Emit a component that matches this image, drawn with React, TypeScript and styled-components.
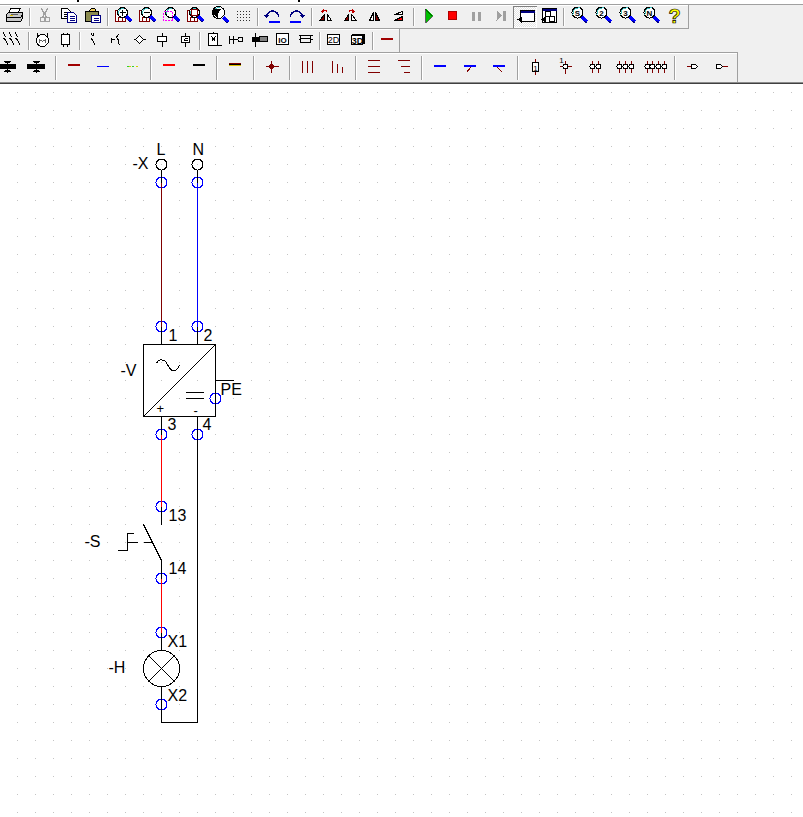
import React, { ReactNode } from "react"
import styled, { createGlobalStyle } from "styled-components"

const K = "#000000"
const R = "#800000"
const B = "#0000ff"
const N = "#000080"
const G = "#a0a0a0"

const GlobalStyle = createGlobalStyle`
    html, body {
        margin: 0;
        height: 100%;
        overflow: hidden;
        background: #ffffff;
    }
    #root {
        height: 100%;
    }
`

const Page = styled.div`
    display: flex;
    flex-direction: column;
    height: 817px;
    width: 803px;
    font-family: "Liberation Sans", Arial, sans-serif;
`

const MenuStrip = styled.div`
    display: flex;
    height: 4px;
    background: #ffffff;
`

const Descender = styled.span<{ $left: number }>`
    width: 2px;
    height: 2px;
    margin-left: ${(p) => p.$left}px;
    background: #000000;
`

const Header = styled.header`
    display: flex;
    flex-direction: column;
    background: #f0f0f0;
    border-top: 1px solid ${G};
    border-bottom: 1px solid #404040;
    padding-bottom: 1px;
    box-shadow: inset 0 -1px 0 #8c8c8c;
`

const Toolbar = styled.div<{ $width: number; $ruled?: boolean; $closed?: boolean; $pad: number }>`
    display: flex;
    align-items: center;
    box-sizing: border-box;
    width: ${(p) => p.$width}px;
    padding: 1px 0 0 ${(p) => p.$pad}px;
    border-right: 1px solid ${G};
    border-top: ${(p) => (p.$ruled ? `1px solid ${G}` : "0")};
    border-bottom: ${(p) => (p.$closed ? `1px solid ${G}` : "0")};
    box-shadow: inset 0 1px 0 #ffffff;
`

const ToolButton = styled.div<{ $w: number; $h: number; $pressed?: boolean; $shift?: number }>`
    display: flex;
    flex: none;
    align-items: center;
    justify-content: center;
    box-sizing: border-box;
    width: ${(p) => p.$w}px;
    height: ${(p) => p.$h}px;
    padding-bottom: 2px;
    margin-left: ${(p) => p.$shift || 0}px;
    ${(p) =>
        p.$pressed
            ? `background: repeating-conic-gradient(#ffffff 0 25%, #e4e4e4 0 50%) 0 0 / 2px 2px;
               box-shadow: inset 1px 1px 0 #808080, inset -1px -1px 0 #ffffff;`
            : ""}
`

const Separator = styled.div<{ $gap: number; $h: number }>`
    display: flex;
    flex: none;
    justify-content: center;
    width: ${(p) => p.$gap}px;
    height: ${(p) => p.$h}px;

    &::before {
        content: "";
        width: 1px;
        background: ${G};
        border-right: 1px solid #ffffff;
    }
`

const Glyph = styled.svg`
    flex: none;
    width: 20px;
    height: 20px;
    overflow: visible;
    shape-rendering: crispEdges;
`

const GlyphText = styled.text<{ $size: number; $bold?: boolean }>`
    font-family: "Liberation Sans", Arial, sans-serif;
    font-size: ${(p) => p.$size}px;
    font-weight: ${(p) => (p.$bold ? 700 : 400)};
    text-anchor: middle;
`

const Canvas = styled.main`
    flex: 1;
    overflow: hidden;
    background-color: #ffffff;
    background-image: linear-gradient(to right, transparent 1px, #ffffff 1px),
        linear-gradient(to bottom, #c4c4c4 1px, #ffffff 1px);
    background-size: 18px 18px;
    background-position: 17px 8px;
`

const Diagram = styled.svg`
    display: block;
    width: 803px;
    height: 733px;
    shape-rendering: crispEdges;
`

const DiagramLabel = styled.text<{ $size?: number }>`
    font-family: "Liberation Sans", Arial, sans-serif;
    font-size: ${(p) => p.$size || 16}px;
    fill: #000000;
`

const L = ({ d, c = K, w = 1 }: { d: string; c?: string; w?: number }) => (
    <path d={d} fill="none" stroke={c} strokeWidth={w} />
)

const Lens = ({ x = 0, y = -3, r = 5, children }: { x?: number; y?: number; r?: number; children?: ReactNode }) => (
    <>
        <L d={`M${x + r - 1} ${y + r - 1} L${x + r + 4} ${y + r + 4}`} c={B} w={3} />
        <L d={`M${x + r + 1} ${y + r + 3} L${x + r + 4} ${y + r + 5}`} c={N} />
        <circle cx={x} cy={y} r={r} fill="#ffffff" stroke={K} />
        <path d={`M${x - r + 1} ${y + 2} A${r} ${r} 0 0 1 ${x + 2} ${y - r + 1}`} fill="none" stroke="#40c0c0" />
        {children}
    </>
)

const Doc = ({ x = -7, y = -5, w = 10, h = 11 }) => (
    <path
        d={`M${x} ${y} H${x + w} V${y + h} H${x}Z M${x + 3} ${y + h} V${y + h - 4} H${x + 7} V${y + h}`}
        fill="#ffffff"
        stroke={R}
        strokeWidth={1.4}
    />
)

const LetterLens = ({ t }: { t: string }) => (
    <Lens x={-1} y={-3} r={5.5}>
        <GlyphText x={-1} y={0} $size={8} $bold>
            {t}
        </GlyphText>
    </Lens>
)

const Pin = ({ x, y = 0 }: { x: number; y?: number }) => (
    <>
        <L d={`M${x} ${y - 6} V${y + 6}`} c={R} />
        <circle cx={x} cy={y} r={2.5} fill="#ffffff" stroke={K} />
    </>
)

const Contact = ({ x }: { x: number }) => <L d={`M${x - 2} -7 L${x} -2 M${x - 1} -1 L${x + 3} 6 M${x - 3} -1 H${x - 1}`} />

const icons: Record<string, ReactNode> = {
    print: (
        <>
            <path d="M-4 -7 H6 L3 -2 H-6Z" fill="#ffffff" stroke={K} />
            <path d="M-8 -1 L-6 -3 H8 V3 L6 6 H-8Z" fill="#c8c8c8" stroke={K} />
            <L d="M-8 2 H6 L8 -1" />
            <L d="M-4 -1 H3" c="#606060" />
            <L d="M-5 0 H-2" c="#e0c000" />
        </>
    ),
    cut: (
        <>
            <L d="M-3 -7 L2 2 M3 -7 L-2 2" c={G} w={1.4} />
            <circle cx={-2} cy={4} r={2.4} fill="none" stroke={G} />
            <circle cx={3} cy={4} r={2.4} fill="none" stroke={G} />
        </>
    ),
    copy: (
        <>
            <path d="M-7 -7 H-1 L2 -4 V3 H-7Z" fill="#ffffff" stroke={K} />
            <L d="M-5 -3 H0 M-5 -1 H0 M-5 1 H-1" />
            <path d="M-1 -3 H5 L8 0 V7 H-1Z" fill="#ffffff" stroke={N} strokeWidth={1.3} />
            <L d="M1 1 H6 M1 3 H6 M1 5 H6" c={N} />
        </>
    ),
    paste: (
        <>
            <path d="M-7 -4 H6 V6 H-7Z" fill="#8c8c50" stroke={K} />
            <path d="M-4 -4 L-1 -7 H2 L4 -4Z" fill="#f0d060" stroke={K} />
            <path d="M-1 0 H8 V7 H-1Z" fill="#ffffff" stroke={N} strokeWidth={1.3} />
            <L d="M1 3 H6 M1 5 H6" c={N} />
        </>
    ),
    zoomIn: (
        <>
            <Doc />
            <Lens>
                <L d="M-3 -3 H3 M0 -6 V0" />
            </Lens>
        </>
    ),
    zoomOut: (
        <>
            <Doc />
            <Lens>
                <L d="M-3 -3 H3" />
            </Lens>
        </>
    ),
    zoomBox: (
        <>
            <Lens />
            <path d="M-7 -4 H2 V5 H-7Z" fill="none" stroke="#ff00ff" strokeWidth={1.4} strokeDasharray="2 1" />
        </>
    ),
    zoomPage: (
        <>
            <Doc />
            <Lens>
                <path d="M-3 -6 H3 V0 H-3Z" fill="none" stroke={R} />
            </Lens>
        </>
    ),
    zoomPan: (
        <>
            <Lens x={0} y={-3} r={6} />
            <path d="M-7 -5 L-4 -7 L3 -7 L0 -3 L-1 3 L-4 0 L-6 -1Z" fill={K} />
        </>
    ),
    grid: (
        <path
            d="M-6 -4 h1 M-3 -4 h1 M0 -4 h1 M3 -4 h1 M6 -4 h1 M-6 -1 h1 M-3 -1 h1 M0 -1 h1 M3 -1 h1 M6 -1 h1 M-6 2 h1 M-3 2 h1 M0 2 h1 M3 2 h1 M6 2 h1 M-6 5 h1 M-3 5 h1 M0 5 h1 M3 5 h1 M6 5 h1"
            stroke="#303030"
        />
    ),
    undo: (
        <>
            <L d="M-6 1 A6 6 0 1 1 6 2" c={N} w={1.5} />
            <path d="M-9 -1 H-3 L-6 3Z" fill={N} />
            <L d="M-4 6 H7" c={B} w={2} />
        </>
    ),
    redo: (
        <>
            <L d="M6 1 A6 6 0 1 0 -6 2" c={N} w={1.5} />
            <path d="M9 -1 H3 L6 3Z" fill={N} />
            <L d="M-7 6 H4" c={B} w={2} />
        </>
    ),
    mirrorA: (
        <>
            <path d="M-2 -1 V5 H-7Z" fill={R} stroke={K} />
            <path d="M1 -1 V5 H5Z" fill="#ffffff" stroke={K} />
            <L d="M-4 -3 C-3 -6 0 -6 1 -3" c="#c00000" />
            <L d="M-3 -6 L-5 -4 L-3 -3" c="#c00000" />
        </>
    ),
    mirrorB: (
        <>
            <path d="M-2 -1 V5 H-6Z" fill={R} stroke={K} />
            <path d="M1 -1 V5 H6Z" fill="#ffffff" stroke={K} />
            <L d="M3 -3 C2 -6 -1 -6 -2 -3" c="#c00000" />
            <L d="M2 -6 L4 -4 L2 -3" c="#c00000" />
        </>
    ),
    mirrorC: (
        <>
            <path d="M-1 -3 V5 H-5Z" fill="#ffffff" stroke={K} />
            <path d="M1 -3 V5 H5Z" fill={R} stroke={K} />
        </>
    ),
    mirrorD: (
        <>
            <path d="M4 -4 V-1 H-4Z" fill="#ffffff" stroke={K} />
            <path d="M4 1 V5 H-4Z" fill="#ff0000" stroke={K} />
        </>
    ),
    play: <path d="M-3 -7 L4 0 L-3 7Z" fill="#00c000" stroke={K} strokeWidth={0.6} />,
    stop: <path d="M-4 -4 H4 V4 H-4Z" fill="#ff0000" stroke="#b00000" />,
    pause: <L d="M-3 -4 V5 M3 -4 V5" c={G} w={2.4} />,
    step: (
        <>
            <path d="M-4 -5 L2 0 L-4 5Z" fill={G} />
            <L d="M4 -5 V5" c={G} w={2.4} />
        </>
    ),
    windowA: (
        <>
            <path d="M-4 -5 H10 V6 H-4Z" fill="#ffffff" stroke={K} />
            <path d="M-4 -5 H10 V-3 H-4Z" fill={N} />
            <path d="M-7 4 L-3 1 V8Z" fill={K} />
        </>
    ),
    windowB: (
        <>
            <path d="M-6 -7 H8 V7 H-6Z" fill="#ffffff" stroke={K} />
            <path d="M-6 -7 H8 V-5 H-6Z" fill={N} />
            <path d="M-7 4 L-3 1 V8Z" fill={K} />
            <path d="M-3 -4 H2 V1 H-3Z M1 1 H6 V6 H1Z" fill="#ffffff" stroke={K} />
        </>
    ),
    zoomS: <LetterLens t="S" />,
    zoom2: <LetterLens t="2" />,
    zoom3: <LetterLens t="3" />,
    zoomN: <LetterLens t="N" />,
    help: (
        <GlyphText x={0} y={7} $size={20} $bold fill="#ffff00" stroke={K} strokeWidth={0.7}>
            ?
        </GlyphText>
    ),

    contacts: (
        <>
            <Contact x={-9} />
            <Contact x={-3} />
            <Contact x={3} />
        </>
    ),
    motor: (
        <>
            <circle cx={0} cy={1} r={6} fill="#ffffff" stroke={K} />
            <L d="M-5 -2 V-7 M5 -2 V-7" />
            <L d="M-3 3 V0 L0 2 L3 0 V3" c="#606060" />
        </>
    ),
    device: (
        <>
            <path d="M-4 -5 H4 V5 H-4Z" fill="#ffffff" stroke={K} />
            <L d="M-2 -7 V-5 M2 -7 V-5 M-2 5 V7 M2 5 V7" />
        </>
    ),
    slash: <L d="M-2 -6 L-1 -3 M-2 -1 L2 6 M0 -7 V-4" />,
    pushButton: <L d="M-5 -2 V3 M-5 0 H-2 M0 0 H2 M2 -5 L-1 -1 M1 -1 L3 6" />,
    diamond: (
        <>
            <path d="M0 -4 L4 0 L0 4 L-4 0Z" fill="#ffffff" stroke={K} strokeWidth={1.4} />
            <L d="M-6 0 H-4 M4 0 H6" />
        </>
    ),
    coil: (
        <>
            <L d="M0 -7 V7" />
            <path d="M-5 -3 H4 V2 H-5Z" fill="#ffffff" stroke={K} />
        </>
    ),
    relay: (
        <>
            <L d="M0 -7 V7" />
            <path d="M-4 -3 H4 V3 H-4Z" fill="#ffffff" stroke={K} strokeWidth={1.6} />
            <L d="M-1 -1 H2 M-1 1 H2 M-1 -1 V1" />
        </>
    ),
    logic: (
        <>
            <path d="M-5 -6 H4 V6 H-5Z" fill="#ffffff" stroke={K} />
            <L d="M0 -8 V-6 M4 6 H8 M-2 -3 L2 2 M2 -3 L-2 2" />
        </>
    ),
    timer: (
        <>
            <L d="M-7 -4 V4 M-3 -4 V4 M-7 0 H1" />
            <circle cx={4} cy={0} r={2.5} fill="none" stroke={K} />
        </>
    ),
    fuse: (
        <>
            <L d="M-4 -7 V7" c={K} />
            <path d="M-8 -3 H-1 V2 H-8Z" fill={K} />
            <path d="M0 -3 H8 V2 H0Z" fill="#808080" stroke={K} />
        </>
    ),
    io: (
        <>
            <path d="M-6 -6 H6 V5 H-6Z" fill="#ffffff" stroke={K} />
            <GlyphText x={0} y={3} $size={8} $bold>
                IO
            </GlyphText>
        </>
    ),
    table: <L d="M-7 -4 H7 M-5 -4 V3 M5 -4 V3 M-5 -1 H5 M-5 3 H5 M-7 0 H-5 M5 0 H7" />,
    two: (
        <>
            <path d="M-6 -5 H6 V5 H-6Z" fill="#ffffff" stroke={K} />
            <GlyphText x={0} y={3} $size={9}>
                2D
            </GlyphText>
        </>
    ),
    three: (
        <>
            <path d="M-6 -6 H7 V4 H-6Z" fill={K} />
            <path d="M-6 -4 H5 V5 H-6Z" fill="#ffffff" stroke={K} />
            <GlyphText x={0} y={4} $size={9} $bold>
                3D
            </GlyphText>
        </>
    ),
    wire: <L d="M-6 -0.5 H6" c="#a00000" w={2} />,

    wireThick: (
        <>
            <L d="M0 -6 V6" />
            <path d="M-9 -2 H8 V2 H-9Z" fill={K} stroke={K} />
            <path d="M-3 -5 H3 L0 -3Z M-3 5 H3 L0 3Z" fill={K} stroke={K} />
        </>
    ),
    lineR: <L d="M-6 -1.5 H6" c="#a00000" w={2} />,
    lineB: <L d="M-6 0 H6" c={B} />,
    linePE: (
        <>
            <L d="M-6 0 H-4 M-1 0 H1" c="#30d030" />
            <L d="M-4 0 H-2 M3 0 H5" c="#d0d000" />
        </>
    ),
    lineRed: <L d="M-6 -1.5 H6" c="#ff0000" w={2} />,
    lineK: <L d="M-6 -1.5 H6" c={K} w={2} />,
    cable: (
        <>
            <L d="M-6 -3 H6" c={R} />
            <L d="M-6 -2 H6" c={K} />
            <L d="M-6 -1 H6" c="#e0c000" />
        </>
    ),
    junction: (
        <>
            <L d="M-6 0 H7 M0 -6 V6" c={R} />
            <circle cx={0} cy={0} r={2.5} fill={R} />
        </>
    ),
    bus3: <L d="M-5 -6 V6 M0 -6 V6 M5 -6 V6" c={R} />,
    busStep: <L d="M-5 -6 V6 M0 -3 V6 M5 0 V6" c={R} />,
    bars3: <L d="M-6 -6 H6 M-6 0 H6 M-6 6 H6" c={R} />,
    barsStep: <L d="M-6 -6 H6 M-3 0 H6 M0 6 H6" c={R} />,
    branchA: <L d="M-6 -0.5 H6" c={B} w={2} />,
    branchB: (
        <>
            <L d="M-6 -0.5 H6" c={B} w={2} />
            <L d="M1 1 L-3 6" c={R} />
        </>
    ),
    branchC: (
        <>
            <L d="M-6 -0.5 H6" c={B} w={2} />
            <L d="M-1 1 L4 6" c={R} />
        </>
    ),
    terminal: (
        <>
            <L d="M0 -8 V8" c={R} />
            <path d="M-3 -4 H3 V5 H-3Z" fill="#ffffff" stroke={K} />
            <GlyphText x={0} y={4} $size={8}>
                1
            </GlyphText>
        </>
    ),
    pinOne: (
        <>
            <L d="M-6 0 H6 M0 -6 V7" c={R} />
            <circle cx={0} cy={0} r={2.5} fill="#ffffff" stroke={K} />
            <GlyphText x={-4} y={-4} $size={8}>
                1
            </GlyphText>
        </>
    ),
    pins2: (
        <>
            <Pin x={-3} />
            <Pin x={3} />
        </>
    ),
    pins3: (
        <>
            <Pin x={-6} />
            <Pin x={0} />
            <Pin x={6} />
        </>
    ),
    pins4: (
        <>
            <Pin x={-8} />
            <Pin x={-3} />
            <Pin x={3} />
            <Pin x={9} />
        </>
    ),
    plugIn: (
        <>
            <L d="M-6 0 H-1" c={R} />
            <path d="M-1 -2 H3 L5 0 L3 2 H-1Z" fill="#ffffff" stroke={K} />
        </>
    ),
    plugOut: (
        <>
            <path d="M-6 -2 H-2 L0 0 L-2 2 H-6Z" fill="#ffffff" stroke={K} />
            <L d="M0 0 H5" c={R} />
        </>
    ),
}

type Item = string | { name: string; w?: number; pressed?: boolean; shift?: number }

const Row = ({ items, w, h, gap, sepH }: { items: Item[]; w: number; h: number; gap: number; sepH: number }) => (
    <>
        {items.map((item, i) => {
            if (item === "|") return <Separator key={i} $gap={gap} $h={sepH} />
            const it = typeof item === "string" ? { name: item } : item
            return (
                <ToolButton key={i} $w={it.w || w} $h={h} $pressed={it.pressed} $shift={it.shift}>
                    <Glyph viewBox="-9.5 -9.5 20 20">{icons[it.name]}</Glyph>
                </ToolButton>
            )
        })}
    </>
)

const mainTools: Item[] = [
    "print", "|", "cut", "copy", "paste", "|", "zoomIn", "zoomOut", "zoomBox", "zoomPage", "zoomPan", "grid", "|",
    "undo", "redo", "|", "mirrorA", "mirrorB", "mirrorC", "mirrorD", "|", "play", "stop", "pause", "step",
    { name: "windowA", pressed: true }, "windowB", "|", "zoomS", "zoom2", "zoom3", "zoomN", "help",
]

const symbolTools: Item[] = [
    "contacts", "|", "motor", "device", "|", "slash", "pushButton", "diamond", "coil", "relay", "|",
    "logic", "timer", "fuse", "io", "table", "|", { name: "two", w: 24 }, { name: "three", w: 24 }, "|", "wire",
]

const wireTools: Item[] = [
    { name: "wireThick", shift: -7 }, "wireThick", "|", "lineR", "lineB", "linePE", "|", "lineRed", "lineK", "|",
    "cable", "|", "junction", "|", "bus3", "busStep", "|", "bars3", "barsStep", "|", "branchA", "branchB", "branchC", "|",
    { name: "terminal", w: 30 }, { name: "pinOne", w: 30 }, { name: "pins2", w: 30 }, { name: "pins3", w: 30 },
    { name: "pins4", w: 30 }, "|", { name: "plugIn", w: 30 }, { name: "plugOut", w: 30 },
]

const connectors = [
    [161, 182], [197, 182], [161, 326], [197, 326], [161, 434], [197, 434], [215, 398],
    [161, 506], [161, 578], [161, 632], [161, 704],
]

const labels: [string, number, number][] = [
    ["L", 156, 154], ["N", 192, 154], ["-X", 132, 168], ["1", 168, 340], ["2", 203, 340], ["-V", 120, 375],
    ["PE", 220, 394], ["3", 167, 429], ["4", 202, 429], ["13", 168, 520], ["-S", 84, 546], ["14", 168, 573],
    ["X1", 167, 646], ["-H", 108, 672], ["X2", 167, 700],
]

const wires: [string, string][] = [
    ["M161 169 V182 M197 169 V182", K],
    ["M161 182 V326", R],
    ["M197 182 V326", B],
    ["M161 326 V344 M197 326 V344 M161 416 V434 M197 416 V722 H161 V704", K],
    ["M161 434 V506 M161 578 V632", "#ff0000"],
    ["M161 506 V524 M143 524 L161 560 V578 M161 632 V650 M161 686 V704", K],
]

const App = () => (
    <Page>
        <GlobalStyle />
        <MenuStrip>
            <Descender $left={77} />
            <Descender $left={219} />
        </MenuStrip>
        <Header>
            <Toolbar $width={689} $pad={3} $closed>
                <Row items={mainTools} w={24} h={22} gap={6} sepH={18} />
            </Toolbar>
            <Toolbar $width={400} $pad={3}>
                <Row items={symbolTools} w={23} h={22} gap={5} sepH={18} />
            </Toolbar>
            <Toolbar $width={738} $pad={0} $ruled>
                <Row items={wireTools} w={29.5} h={28} gap={7} sepH={24} />
            </Toolbar>
        </Header>
        <Canvas>
            <Diagram viewBox="-0.5 83.5 803 733">
                {connectors.map(([x, y]) => (
                    <circle key={`${x}-${y}`} cx={x} cy={y} r={5.5} fill="none" stroke={B} />
                ))}
                <circle cx={161} cy={164} r={5.5} fill="none" stroke={K} />
                <circle cx={197} cy={164} r={5.5} fill="none" stroke={K} />
                {wires.map(([d, c]) => (
                    <path key={d} d={d} fill="none" stroke={c} />
                ))}

                <path d="M143 344 H215 V416 H143Z M215 344 L143 416 M215 380 H233" fill="none" stroke={K} />
                <path d="M156 363 C158 358 164 358 167 364 C170 371 175 373 179 365" fill="none" stroke={K} />
                <path d="M185 392 H203 M185 398 H203" fill="none" stroke={K} />

                <path d="M117 550 H127 V533 H133 M127 542 H137 M143 542 H152" fill="none" stroke={K} />

                <circle cx={161} cy={668} r={18} fill="none" stroke={K} />
                <path d="M148 655 L174 681 M174 655 L148 681" fill="none" stroke={K} />

                {labels.map(([t, x, y]) => (
                    <DiagramLabel key={t} x={x} y={y}>
                        {t}
                    </DiagramLabel>
                ))}
                <DiagramLabel x={156} y={412} $size={13}>
                    +
                </DiagramLabel>
                <DiagramLabel x={193} y={414} $size={13}>
                    -
                </DiagramLabel>
            </Diagram>
        </Canvas>
    </Page>
)

export default App
